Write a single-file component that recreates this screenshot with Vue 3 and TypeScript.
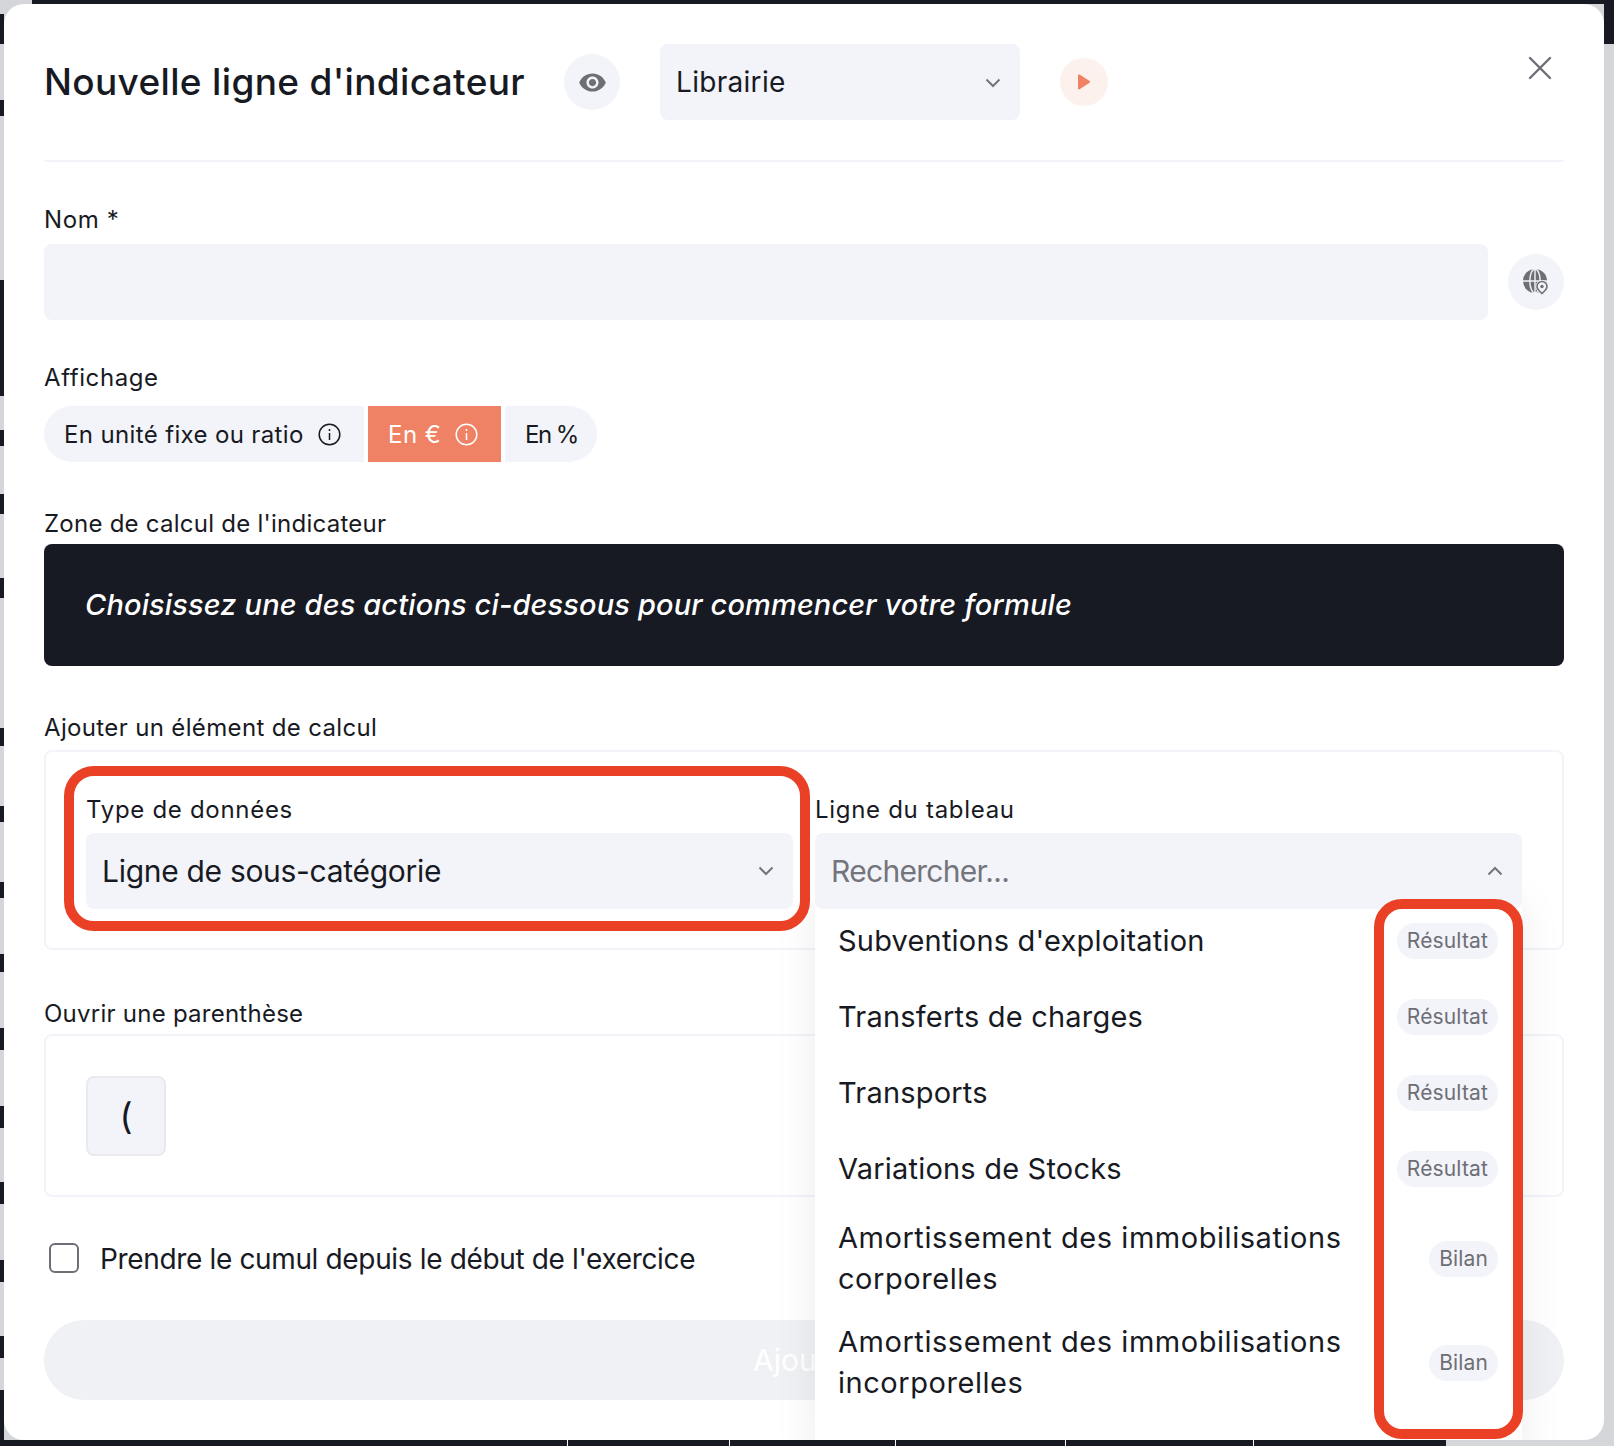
<script setup lang="ts">
interface Row {
  label: string;
  tag: string;
}

const rows: Row[] = [
  { label: "Subventions d'exploitation", tag: 'Résultat' },
  { label: 'Transferts de charges', tag: 'Résultat' },
  { label: 'Transports', tag: 'Résultat' },
  { label: 'Variations de Stocks', tag: 'Résultat' },
  { label: 'Amortissement des immobilisations corporelles', tag: 'Bilan' },
  { label: 'Amortissement des immobilisations incorporelles', tag: 'Bilan' },
];
</script>

<template>
  <div class="page">
    <div class="modal">
      <header class="head">
        <h1 class="title">Nouvelle ligne d'indicateur</h1>
        <button class="round eye">
          <svg width="29" height="29" viewBox="0 0 24 24" fill="#6d6e76">
            <path d="M12 4.5C7 4.5 2.73 7.61 1 12c1.73 4.39 6 7.5 11 7.5s9.27-3.11 11-7.5c-1.73-4.39-6-7.5-11-7.5zM12 17c-2.76 0-5-2.24-5-5s2.24-5 5-5 5 2.24 5 5-2.24 5-5 5zm0-8c-1.66 0-3 1.34-3 3s1.34 3 3 3 3-1.34 3-3-1.34-3-3-3z" />
          </svg>
        </button>
        <div class="select lib">
          <span>Librairie</span>
          <svg class="chev" width="16" height="10" viewBox="0 0 16 10" fill="none" stroke="#73747c" stroke-width="2">
            <path d="M1.5 1.5 8 8l6.5-6.5" />
          </svg>
        </div>
        <button class="round play">
          <svg width="14" height="16" viewBox="0 0 14 16" fill="#ef8265"><path d="M1 1.5c0-.8.9-1.3 1.6-.9l10 6.5c.6.4.6 1.3 0 1.7l-10 6.5c-.7.4-1.6-.1-1.6-.9z" /></svg>
        </button>
        <svg class="close" width="24" height="24" viewBox="0 0 24 24" fill="none" stroke="#6d6e76" stroke-width="2.4" stroke-linecap="round">
          <path d="M2 2l20 20M22 2 2 22" />
        </svg>
      </header>

      <label class="lbl nom-lbl">Nom *</label>
      <div class="nom-row">
        <div class="input"></div>
        <button class="round globe">
          <svg width="26" height="27" viewBox="0 0 26 27">
            <circle cx="12" cy="12" r="12" fill="#6d6e76" />
            <ellipse cx="12" cy="12" rx="5.2" ry="12" fill="none" stroke="#f3f4f9" stroke-width="1.4" />
            <path d="M12 0v24M0 12h24" stroke="#f3f4f9" stroke-width="1.4" />
            <path d="M19 26.5c-3-3-6.5-5.400-6.500-9a6.500 6.500 0 0 1 13 0c0 3.600-3.500 6-6.500 9z" fill="#f3f4f9" />
            <path d="M19 24.500c-2.300-2.300-5-4.200-5-7a5 5 0 0 1 10 0c0 2.800-2.700 4.700-5 7z" fill="none" stroke="#6d6e76" stroke-width="1.600" />
            <circle cx="19" cy="17.500" r="1.700" fill="#6d6e76" />
          </svg>
        </button>
      </div>

      <label class="lbl aff-lbl">Affichage</label>
      <div class="seg">
        <div class="seg-item first">
          <span>En unité fixe ou ratio</span>
          <svg width="23" height="23" viewBox="0 0 23 23" fill="none" stroke="#181a23" stroke-width="1.500">
            <circle cx="11.500" cy="11.500" r="10.300" />
            <path d="M11.500 10v7M11.500 6v2" />
          </svg>
        </div>
        <div class="seg-item on">
          <span>En €</span>
          <svg width="23" height="23" viewBox="0 0 23 23" fill="none" stroke="#fff" stroke-width="1.500">
            <circle cx="11.500" cy="11.500" r="10.300" />
            <path d="M11.500 10v7M11.500 6v2" />
          </svg>
        </div>
        <div class="seg-item last"><span>En %</span></div>
      </div>

      <label class="lbl zone-lbl">Zone de calcul de l'indicateur</label>
      <div class="zone">Choisissez une des actions ci-dessous pour commencer votre formule</div>

      <label class="lbl add-lbl">Ajouter un élément de calcul</label>
      <div class="box add-box">
        <div class="col">
          <label class="lbl col-lbl">Type de données</label>
          <div class="select big">
            <span class="big-text">Ligne de sous-catégorie</span>
            <svg class="chev" width="16" height="10" viewBox="0 0 16 10" fill="none" stroke="#73747c" stroke-width="2">
              <path d="M1.500 1.500 8 8l6.500-6.500" />
            </svg>
          </div>
          <div class="mark mark-type"></div>
        </div>
        <div class="col">
          <label class="lbl col-lbl">Ligne du tableau</label>
          <div class="select big">
            <span class="placeholder">Rechercher...</span>
            <svg class="chev" width="16" height="10" viewBox="0 0 16 10" fill="none" stroke="#73747c" stroke-width="2">
              <path d="M1.500 8.500 8 2l6.500 6.500" />
            </svg>
          </div>
          <div class="drop">
            <div v-for="row in rows" :key="row.label" :class="['drop-row', { long: row.tag === 'Bilan' }]">
              <span class="drop-text">{{ row.label }}</span>
              <span class="tag">{{ row.tag }}</span>
            </div>
          </div>
          <div class="mark mark-tags"></div>
        </div>
      </div>

      <label class="lbl par-lbl">Ouvrir une parenthèse</label>
      <div class="box par-box">
        <button class="paren">(</button>
      </div>

      <div class="check-row">
        <span class="check"></span>
        <span class="check-text">Prendre le cumul depuis le début de l'exercice</span>
      </div>

      <button class="submit">Ajouter</button>
    </div>
  </div>
</template>

<style>
body {
  margin: 0;
  background: #d5d6da;
}
</style>

<style scoped>
.page {
  width: 1614px;
  height: 1446px;
  box-sizing: border-box;
  padding: 4px 10px 6px 4px;
  overflow: hidden;
  font-family: Inter, "Liberation Sans", sans-serif;
  color: #181a23;
  background-color: #d5d6da;
  background-repeat: no-repeat;
  background-image:
    linear-gradient(#181a23, #181a23),
    linear-gradient(#181a23, #181a23),
    linear-gradient(to right, #181a23 567px, #fff 567px, #fff 568px, #181a23 568px, #181a23 729px, #fff 729px, #fff 730px, #181a23 730px, #181a23 895px, #fff 895px, #fff 896px, #181a23 896px, #181a23 1065px, #fff 1065px, #fff 1066px, #181a23 1066px, #181a23 1253px, #fff 1253px, #fff 1254px, #181a23 1254px),
    linear-gradient(to bottom, transparent 14px, #181a23 14px, #181a23 44px, transparent 44px, transparent 100px, #181a23 100px, #181a23 116px, transparent 116px, transparent 280px, #181a23 280px, #181a23 396px, transparent 396px, transparent 430px, #181a23 430px, #181a23 446px, transparent 446px, transparent 494px, #181a23 494px, #181a23 514px, transparent 514px, transparent 578px, #181a23 578px, #181a23 598px, transparent 598px, transparent 728px, #181a23 728px, #181a23 746px, transparent 746px, transparent 806px, #181a23 806px, #181a23 822px, transparent 822px, transparent 882px, #181a23 882px, #181a23 898px, transparent 898px, transparent 954px, #181a23 954px, #181a23 972px, transparent 972px, transparent 1028px, #181a23 1028px, #181a23 1050px, transparent 1050px, transparent 1106px, #181a23 1106px, #181a23 1128px, transparent 1128px, transparent 1182px, #181a23 1182px, #181a23 1204px, transparent 1204px, transparent 1260px, #181a23 1260px, #181a23 1282px, transparent 1282px, transparent 1336px, #181a23 1336px, #181a23 1358px, transparent 1358px, transparent 1390px, #181a23 1390px);
  background-size: 1582px 4px, 10px 44px, 1446px 6px, 4px 1446px;
  background-position: 32px 0, 1604px 0, 0 1440px, 0 0;
}

.modal {
  position: relative;
  width: 1600px;
  height: 1436px;
  box-sizing: border-box;
  padding: 40px;
  background: #fff;
  border-radius: 20px;
  overflow: hidden;
}

button {
  border: none;
  padding: 0;
  font-family: inherit;
}

.head {
  display: flex;
  align-items: center;
  box-sizing: border-box;
  height: 118px;
  padding-bottom: 40px;
  border-bottom: 2px solid #f3f4f9;
}

.title {
  width: 480px;
  margin: -2px 0 0;
  font-size: 37px;
  font-weight: 500;
  letter-spacing: 0.33px;
  white-space: nowrap;
}

.round {
  display: flex;
  align-items: center;
  justify-content: center;
  flex-shrink: 0;
  border-radius: 50%;
  background: #f3f4f9;
}

.eye {
  width: 56px;
  height: 56px;
  margin-left: 40px;
}

.select {
  display: flex;
  align-items: center;
  justify-content: space-between;
  box-sizing: border-box;
  height: 76px;
  background: #f3f4f9;
  border-radius: 8px;
  padding: 0 19px 0 16px;
}

.lib {
  width: 360px;
  margin-left: 40px;
  font-size: 28px;
  letter-spacing: 0.3px;
}

.lib .chev {
  margin-top: 2px;
}

.play {
  width: 48px;
  height: 48px;
  margin-left: 40px;
  background: #fdf1ee;
}

.close {
  margin-left: auto;
  margin-right: 12px;
  margin-top: -28px;
}

.lbl {
  display: block;
  padding-top: 1px;
  font-size: 24px;
  line-height: 32px;
  letter-spacing: 0.25px;
}

.nom-lbl {
  margin: 41px 0 8px;
  letter-spacing: 0.6px;
}

.nom-row {
  display: flex;
  align-items: center;
  gap: 20px;
}

.input {
  flex: 1;
  height: 76px;
  background: #f3f4f9;
  border-radius: 8px;
}

.globe {
  width: 56px;
  height: 56px;
}

.aff-lbl {
  margin: 41px 0 12px;
  letter-spacing: 0.6px;
}

.seg {
  display: flex;
  gap: 4px;
  height: 56px;
}

.seg-item {
  display: flex;
  align-items: center;
  box-sizing: border-box;
  background: #f3f4f9;
  font-size: 24px;
}

.first {
  width: 320px;
  padding-left: 20px;
  gap: 14px;
  letter-spacing: 0.36px;
  border-radius: 28px 0 0 28px;
}

.on {
  width: 133px;
  padding-left: 20px;
  gap: 14px;
  letter-spacing: 0.5px;
  background: #ef8265;
  color: #fff;
}

.last {
  width: 92px;
  padding-left: 20px;
  letter-spacing: -1.5px;
  border-radius: 0 28px 28px 0;
}

.zone-lbl {
  margin: 45px 0 4px;
}

.zone {
  display: flex;
  align-items: center;
  box-sizing: border-box;
  height: 122px;
  padding: 0 0 2px 41px;
  background: #181a23;
  border-radius: 8px;
  color: #fff;
  font-size: 29px;
  font-style: italic;
  font-weight: 500;
  letter-spacing: 0.14px;
}

.add-lbl {
  margin: 45px 0 6px;
  letter-spacing: 0.35px;
}

.box {
  box-sizing: border-box;
  border: 2px solid #f3f4f9;
  border-radius: 8px;
}

.add-box {
  display: grid;
  grid-template-columns: 1fr 1fr;
  gap: 22px;
  height: 200px;
  padding: 41px 40px 0;
}

.col {
  position: relative;
}

.col-lbl {
  margin-bottom: 7px;
  letter-spacing: 0.7px;
}

.big {
  position: relative;
  z-index: 2;
  padding-right: 19px;
  font-size: 30px;
}

.big-text {
  letter-spacing: -0.3px;
}

.placeholder {
  color: #73747c;
  letter-spacing: -0.7px;
}

.drop {
  position: absolute;
  z-index: 1;
  left: 0;
  right: 0;
  top: 110px;
  height: 560px;
  background: #fff;
  box-shadow: 0 0 40px rgba(24, 26, 35, 0.08);
}

.drop-row {
  display: flex;
  align-items: center;
  justify-content: space-between;
  box-sizing: border-box;
  min-height: 76px;
  padding: 11px 24px 11px 23px;
  font-size: 29px;
  line-height: 41px;
  letter-spacing: 0.2px;
}

.long {
  letter-spacing: 0.55px;
}

.drop-text {
  max-width: 530px;
  margin: -1px 0 1px;
}

.tag {
  padding: 0 10px;
  height: 36px;
  line-height: 36px;
  background: #f3f4f9;
  border-radius: 18px;
  color: #6d6e76;
  font-size: 21px;
  letter-spacing: 0.15px;
}

.mark {
  position: absolute;
  z-index: 3;
  box-sizing: border-box;
  border: 10px solid #ea4025;
  pointer-events: none;
}

.mark-type {
  top: -27px;
  left: -22px;
  right: -17px;
  height: 165px;
  border-radius: 30px;
}

.mark-tags {
  top: 106px;
  left: 559px;
  right: -1px;
  height: 540px;
  border-radius: 28px;
}

.par-lbl {
  margin: 47px 0 4px;
}

.par-box {
  height: 163px;
  padding: 40px;
}

.paren {
  display: block;
  width: 80px;
  height: 80px;
  background: #f3f4f9;
  border: 2px solid #e9eaef;
  border-radius: 8px;
  font-size: 36px;
  color: #181a23;
}

.check-row {
  display: flex;
  align-items: center;
  gap: 21px;
  margin: 46px 0 0 5px;
  height: 30px;
}

.check {
  width: 30px;
  height: 30px;
  box-sizing: border-box;
  border: 2px solid #6d6e76;
  border-radius: 6px;
}

.check-text {
  padding-top: 2px;
  font-size: 28px;
  letter-spacing: -0.35px;
}

.submit {
  display: block;
  width: 100%;
  height: 80px;
  margin-top: 47px;
  border-radius: 40px;
  background: #f0f1f4;
  color: #fff;
  font-size: 30px;
}
</style>
